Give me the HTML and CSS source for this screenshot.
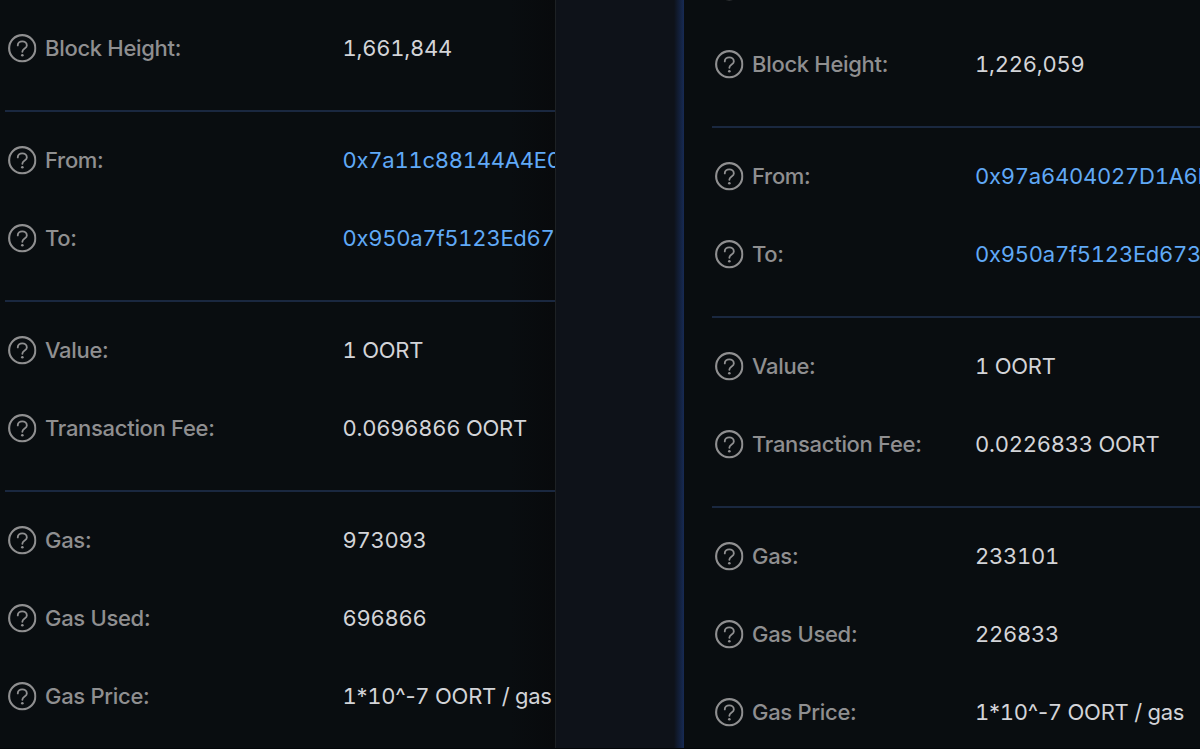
FILE: index.html
```
<!DOCTYPE html>
<html lang="en">
<head>
  <meta charset="UTF-8" />
  <title>Transaction Comparison</title>
  <link rel="stylesheet" href="styles.css">
</head>
<body>
  <svg class="defs" width="0" height="0">
    <symbol id="help" viewBox="0 0 28 28">
      <circle cx="14" cy="14" r="12.9" stroke-width="2.1" />
      <path d="M9.6 11.2C9.6 8.7 11.5 7.3 14 7.3s4.5 1.6 4.5 3.9c0 3.1-4.4 3.1-4.4 6.3" stroke-width="1.8" />
      <circle cx="14.1" cy="20.9" r="1.3" fill="currentColor" stroke="none" />
    </symbol>
  </svg>

  <div class="compare">
    <div class="panel left">
      <div class="group">
        <div class="row"><svg class="icon"><use href="#help" /></svg><span class="label">Block Height:</span><span class="value">1,661,844</span></div>
      </div>
      <div class="group">
        <div class="row"><svg class="icon"><use href="#help" /></svg><span class="label">From:</span><a class="value">0x7a11c88144A4E0</a></div>
        <div class="row"><svg class="icon"><use href="#help" /></svg><span class="label">To:</span><a class="value">0x950a7f5123Ed67</a></div>
      </div>
      <div class="group">
        <div class="row"><svg class="icon"><use href="#help" /></svg><span class="label">Value:</span><span class="value">1 OORT</span></div>
        <div class="row"><svg class="icon"><use href="#help" /></svg><span class="label">Transaction Fee:</span><span class="value">0.0696866 OORT</span></div>
      </div>
      <div class="group">
        <div class="row"><svg class="icon"><use href="#help" /></svg><span class="label">Gas:</span><span class="value">973093</span></div>
        <div class="row"><svg class="icon"><use href="#help" /></svg><span class="label">Gas Used:</span><span class="value">696866</span></div>
        <div class="row"><svg class="icon"><use href="#help" /></svg><span class="label">Gas Price:</span><span class="value">1<span class="sign">*</span>10<span class="sign">^-</span>7 OORT <span class="sign">/</span> gas</span></div>
      </div>
    </div>

    <div class="divider"></div>

    <div class="panel right">
      <div class="group">
        <div class="row"><svg class="icon"><use href="#help" /></svg></div>
        <div class="row"><svg class="icon"><use href="#help" /></svg><span class="label">Block Height:</span><span class="value">1,226,059</span></div>
      </div>
      <div class="group">
        <div class="row"><svg class="icon"><use href="#help" /></svg><span class="label">From:</span><a class="value">0x97a6404027D1A6B</a></div>
        <div class="row"><svg class="icon"><use href="#help" /></svg><span class="label">To:</span><a class="value">0x950a7f5123Ed673</a></div>
      </div>
      <div class="group">
        <div class="row"><svg class="icon"><use href="#help" /></svg><span class="label">Value:</span><span class="value">1 OORT</span></div>
        <div class="row"><svg class="icon"><use href="#help" /></svg><span class="label">Transaction Fee:</span><span class="value">0.0226833 OORT</span></div>
      </div>
      <div class="group">
        <div class="row"><svg class="icon"><use href="#help" /></svg><span class="label">Gas:</span><span class="value">233101</span></div>
        <div class="row"><svg class="icon"><use href="#help" /></svg><span class="label">Gas Used:</span><span class="value">226833</span></div>
        <div class="row"><svg class="icon"><use href="#help" /></svg><span class="label">Gas Price:</span><span class="value">1<span class="sign">*</span>10<span class="sign">^-</span>7 OORT <span class="sign">/</span> gas</span></div>
      </div>
    </div>
  </div>
</body>
</html>
```
FILE: styles.css
```
* {
  box-sizing: border-box;
}

body {
  margin: 0;
  background: #090d10;
  font-family: Inter, "Liberation Sans", sans-serif;
  font-size: 22px;
  overflow: hidden;
}

.defs {
  display: block;
}

.compare {
  display: flex;
  width: 1200px;
  height: 749px;
  border-bottom: 1px solid #04070a;
  overflow: hidden;
}

.panel {
  flex: none;
  overflow: hidden;
}

.left {
  width: 555px;
  padding-left: 5px;
  background: linear-gradient(90deg, #090d10 510px, #080a0c);
}

.right {
  width: 516px;
  padding-left: 28px;
}

.divider {
  flex: none;
  width: 129px;
  border-left: 1px solid #1d2124;
  background: linear-gradient(90deg, #0e1219 118px, #111c32 122px, #172a54);
}

.group {
  display: flex;
  flex-direction: column;
  gap: 49px;
  padding: 34px 0 47px 3px;
  border-bottom: 2px solid #1a2840;
}

.group:last-child {
  border-bottom: none;
}

.right .group:first-child {
  padding-top: 0;
  margin-top: -28px;
}

.row {
  display: flex;
  align-items: center;
  height: 29px;
  line-height: 27px;
  white-space: nowrap;
}

.icon {
  flex: none;
  width: 28.5px;
  height: 28.5px;
  margin-right: 8.5px;
  fill: none;
  stroke: currentColor;
  stroke-linecap: round;
  color: #8f8f90;
}

.label {
  flex: none;
  width: 297.5px;
  color: #8f8f90;
  font-weight: 540;
  letter-spacing: -0.3px;
}

.right .label {
  width: 223px;
}

.value {
  color: #d3d4d8;
  letter-spacing: -0.25px;
  font-variant-numeric: tabular-nums;
}

a.value {
  color: #60a9f6;
}

.sign {
  font-variant-numeric: normal;
}
```
